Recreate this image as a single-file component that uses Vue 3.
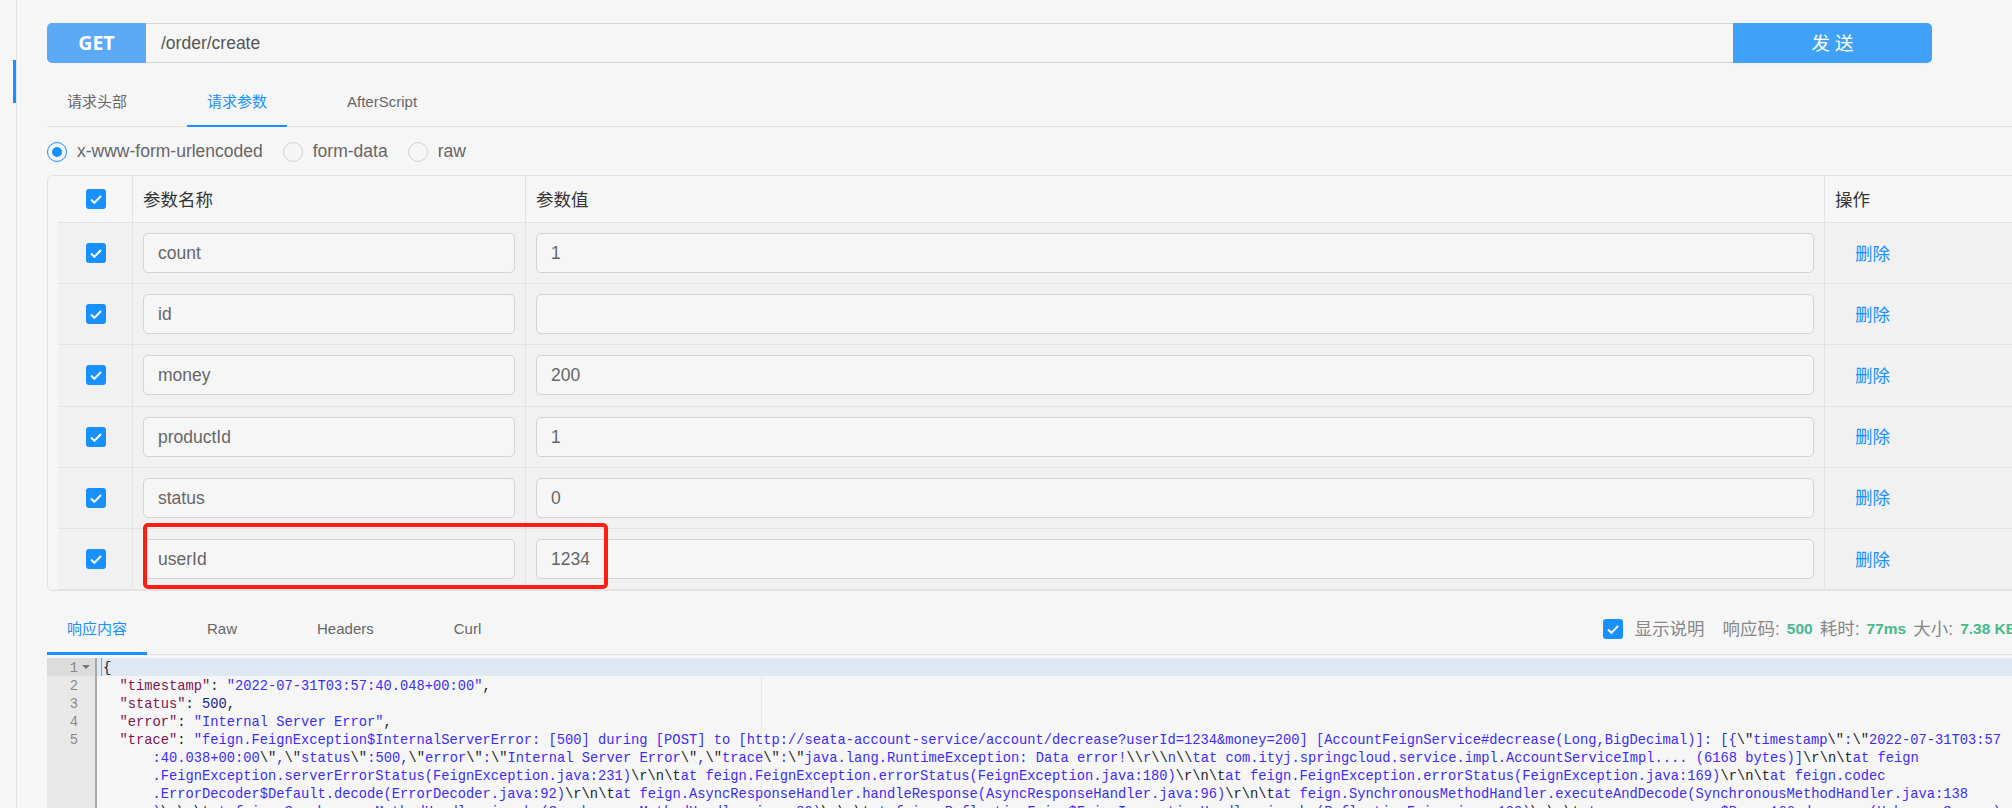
<script setup>
const rows = [
  { name: 'count', value: '1' },
  { name: 'id', value: '' },
  { name: 'money', value: '200' },
  { name: 'productId', value: '1' },
  { name: 'status', value: '0' },
  { name: 'userId', value: '1234' },
]

const strLines = [
  { indent: '  ', key: '"trace"', text: '"feign.FeignException$InternalServerError: [500] during [POST] to [http://seata-account-service/account/decrease?userId=1234&money=200] [AccountFeignService#decrease(Long,BigDecimal)]: [{\\"timestamp\\":\\"2022-07-31T03:57' },
  { indent: '      ', text: ':40.038+00:00\\",\\"status\\":500,\\"error\\":\\"Internal Server Error\\",\\"trace\\":\\"java.lang.RuntimeException: Data error!\\\\r\\\\n\\\\tat com.ityj.springcloud.service.impl.AccountServiceImpl.... (6168 bytes)]\\r\\n\\tat feign' },
  { indent: '      ', text: '.FeignException.serverErrorStatus(FeignException.java:231)\\r\\n\\tat feign.FeignException.errorStatus(FeignException.java:180)\\r\\n\\tat feign.FeignException.errorStatus(FeignException.java:169)\\r\\n\\tat feign.codec' },
  { indent: '      ', text: '.ErrorDecoder$Default.decode(ErrorDecoder.java:92)\\r\\n\\tat feign.AsyncResponseHandler.handleResponse(AsyncResponseHandler.java:96)\\r\\n\\tat feign.SynchronousMethodHandler.executeAndDecode(SynchronousMethodHandler.java:138' },
  { indent: '      ', text: ')\\r\\n\\tat feign.SynchronousMethodHandler.invoke(SynchronousMethodHandler.java:89)\\r\\n\\tat feign.ReflectiveFeign$FeignInvocationHandler.invoke(ReflectiveFeign.java:100)\\r\\n\\tat com.sun.proxy.$Proxy166.decrease(Unknown Source)' },
]

function tokens(text) {
  return text.split(/(\\.)/).filter(Boolean).map((t) => ({ t, esc: t[0] === '\\' }))
}
</script>

<template>
  <div class="page">
    <aside class="side"><span class="side-mark"></span></aside>
    <main class="main">
      <div class="urlbar">
        <div class="method">GET</div>
        <div class="url">/order/create</div>
        <button class="send">发 送</button>
      </div>

      <div class="tabs">
        <span class="tab">请求头部</span>
        <span class="tab active">请求参数</span>
        <span class="tab">AfterScript</span>
      </div>

      <div class="radios">
        <label class="radio"><span class="dot on"></span>x-www-form-urlencoded</label>
        <label class="radio"><span class="dot"></span>form-data</label>
        <label class="radio"><span class="dot"></span>raw</label>
      </div>

      <div class="table">
        <div class="tr head">
          <div class="td c1">
            <span class="check"><svg viewBox="0 0 20 20"><path d="M5 10.5l3.4 3.4L15 7" /></svg></span>
          </div>
          <div class="td c2"><span class="th">参数名称</span></div>
          <div class="td c3"><span class="th">参数值</span></div>
          <div class="td c4"><span class="th">操作</span></div>
        </div>
        <div v-for="r in rows" :key="r.name" class="tr">
          <div class="td c1">
            <span class="check"><svg viewBox="0 0 20 20"><path d="M5 10.5l3.4 3.4L15 7" /></svg></span>
          </div>
          <div class="td c2"><div class="input">{{ r.name }}</div></div>
          <div class="td c3"><div class="input">{{ r.value }}</div></div>
          <div class="td c4"><a class="del">删除</a></div>
        </div>
        <div class="redbox"></div>
      </div>

      <div class="tabs restabs">
        <span class="tab active">响应内容</span>
        <span class="tab">Raw</span>
        <span class="tab">Headers</span>
        <span class="tab">Curl</span>
        <div class="status">
          <span class="check"><svg viewBox="0 0 20 20"><path d="M5 10.5l3.4 3.4L15 7" /></svg></span>
          <span class="show">显示说明</span>
          <span class="lbl">响应码:</span><b>500</b>
          <span class="lbl">耗时:</span><b>77ms</b>
          <span class="lbl">大小:</span><b>7.38 KB</b>
        </div>
      </div>

      <div class="editor">
        <div class="gutter">
          <div class="gl cur">1<i class="fold"></i></div>
          <div class="gl">2</div>
          <div class="gl">3</div>
          <div class="gl">4</div>
          <div class="gl">5</div>
        </div>
        <div class="code">
          <div class="margin"></div>
          <div class="ln cur"><span class="caret"></span>{</div>
          <div class="ln">{{ '  ' }}<span class="k">"timestamp"</span>: <span class="s">"2022-07-31T03:57:40.048+00:00"</span>,</div>
          <div class="ln">{{ '  ' }}<span class="k">"status"</span>: <span class="n">500</span>,</div>
          <div class="ln">{{ '  ' }}<span class="k">"error"</span>: <span class="s">"Internal Server Error"</span>,</div>
          <div v-for="(l, i) in strLines" :key="i" class="ln">{{ l.indent }}<template v-if="l.key"><span class="k">{{ l.key }}</span>: </template><template v-for="(p, j) in tokens(l.text)" :key="j"><span :class="p.esc ? 'e' : 's'">{{ p.t }}</span></template></div>
        </div>
      </div>
    </main>
  </div>
</template>

<style>
html, body { margin: 0; background: #f6f6f6; overflow: hidden; }
</style>

<style scoped>
.page {
  width: 2012px;
  height: 808px;
  display: flex;
  overflow: hidden;
  background: #f6f6f6;
  font-family: "Liberation Sans", "Noto Sans CJK SC", sans-serif;
  font-size: 17.5px;
  color: #555;
}
.side {
  width: 16px;
  flex: none;
  position: relative;
  border-right: 1px solid #e2e2e2;
}
.side-mark {
  position: absolute;
  left: 13px;
  top: 60px;
  width: 3px;
  height: 43px;
  background: #1890ff;
}
.main {
  flex: 1;
  min-width: 0;
  padding: 23px 0 0 30px;
  overflow: hidden;
}
.urlbar {
  width: 1885px;
  height: 40px;
  display: flex;
}
.method {
  width: 99px;
  flex: none;
  background: #5ca9f6;
  border-radius: 5px 0 0 5px;
  color: #fff;
  font-family: "Open Sans", "Liberation Sans", sans-serif;
  font-weight: 700;
  font-size: 19.5px;
  text-align: center;
  line-height: 40px;
}
.url {
  flex: 1;
  box-sizing: border-box;
  border: 1px solid #d4d4d4;
  border-width: 1px 0;
  padding-left: 15px;
  line-height: 38px;
  color: #555;
}
.send {
  width: 199px;
  flex: none;
  border: 0;
  padding: 0 0 3px;
  background: #3fa2f8;
  border-radius: 0 5px 5px 0;
  color: #fff;
  font: inherit;
  font-size: 18.5px;
  box-shadow: 0 2px 0 rgba(0, 0, 0, 0.015);
}
.tabs {
  display: flex;
  align-items: flex-start;
  gap: 40px;
  height: 46px;
  margin-top: 17px;
  border-bottom: 1px solid #e3e3e3;
  font-size: 15px;
  line-height: 44px;
  color: #666;
}
.tab {
  box-sizing: border-box;
  padding: 0 20px;
  height: 47px;
}
.tab.active {
  color: #1890ff;
  border-bottom: 2px solid #1890ff;
}
.radios {
  height: 48px;
  display: flex;
  align-items: center;
  padding-top: 1px;
  box-sizing: border-box;
  gap: 20px;
  color: #666;
}
.radio {
  display: flex;
  align-items: center;
  gap: 10px;
}
.dot {
  width: 20px;
  height: 20px;
  box-sizing: border-box;
  border: 1px solid #d4d4d4;
  border-radius: 50%;
  display: flex;
  align-items: center;
  justify-content: center;
}
.dot.on {
  border-color: #1890ff;
}
.dot.on::after {
  content: "";
  width: 10px;
  height: 10px;
  border-radius: 50%;
  background: #1890ff;
}
.table {
  position: relative;
  width: 2000px;
  box-sizing: border-box;
  border: 1px solid #e3e3e3;
  border-radius: 6px;
  padding-left: 10px;
}
.tr {
  display: flex;
  height: 61.2px;
  box-sizing: border-box;
  background: #f1f1f1;
  border-bottom: 1px solid #e3e3e3;
}
.tr:last-of-type { border-bottom: 0; }
.tr.head {
  height: 47px;
  background: #f6f6f6;
  color: #333;
}
.th { padding-bottom: 2px; }
.td {
  display: flex;
  align-items: center;
  box-sizing: border-box;
  padding: 0 10px;
  border-right: 1px solid #e3e3e3;
}
.c1 { width: 75px; justify-content: center; padding: 0; padding-left: 1px; }
.c2 { width: 393px; }
.c3 { width: 1299px; }
.c4 { flex: 1; border-right: 0; }
.input {
  width: 100%;
  height: 40px;
  box-sizing: border-box;
  border: 1px solid #d4d4d4;
  border-radius: 5px;
  background: #f6f6f6;
  padding-left: 14px;
  line-height: 38px;
  color: #666;
}
.check {
  width: 20px;
  height: 20px;
  flex: none;
  border-radius: 3px;
  background: #1890ff;
  display: block;
}
.check svg {
  display: block;
  width: 20px;
  height: 20px;
  fill: none;
  stroke: #fff;
  stroke-width: 2;
}
.del {
  color: #1890ff;
  margin-left: 20px;
  padding-bottom: 2px;
}
.redbox {
  position: absolute;
  left: 95px;
  top: 347px;
  width: 465px;
  height: 66px;
  box-sizing: border-box;
  border: 4px solid #fa1e14;
  border-radius: 5px;
}
.restabs {
  margin-top: 15.8px;
  height: 47px;
  width: 1977px;
}
.restabs .tab { color: #666; height: 48px; }
.restabs .tab.active { color: #1890ff; border-bottom-width: 3px; }
.status {
  margin-left: auto;
  flex: none;
  display: flex;
  align-items: center;
  height: 44px;
  color: #888;
  font-size: 17.5px;
  white-space: nowrap;
}
.status .show { margin: 0 18px 0 11px; }
.status b {
  color: #47b98b;
  font-size: 15.5px;
  margin: 0 7px;
}
.editor {
  margin-top: 3px;
  display: flex;
  height: 160px;
  font-family: "Liberation Mono", monospace;
  font-size: 13.75px;
  line-height: 22px;
}
.gutter {
  width: 50px;
  flex: none;
  box-sizing: border-box;
  background: #e8e8e8;
  border-right: 2px solid #a8a8a8;
  color: #888;
}
.gl {
  height: 18px;
  box-sizing: border-box;
  padding-right: 17px;
  text-align: right;
  position: relative;
}
.gl.cur { background: #dcdcdc; }
.fold {
  position: absolute;
  right: 5px;
  top: 7px;
  border: 4px solid transparent;
  border-top: 4px solid #777;
  border-bottom: 0;
}
.code {
  flex: 1;
  position: relative;
  min-width: 0;
  color: #222;
}
.margin {
  position: absolute;
  left: 664px;
  top: 18px;
  bottom: 0;
  width: 1px;
  background: #e8e8e8;
}
.ln {
  position: relative;
  height: 18px;
  padding-left: 6px;
  white-space: pre;
}
.ln.cur { background: #dfe9f3; }
.caret {
  position: absolute;
  left: 4px;
  top: 0;
  width: 1px;
  height: 18px;
  background: #999;
}
.k { color: #7b1650; }
.s { color: #3c2df2; }
.n { color: #1c1c8c; }
.e { color: #222; }
</style>
